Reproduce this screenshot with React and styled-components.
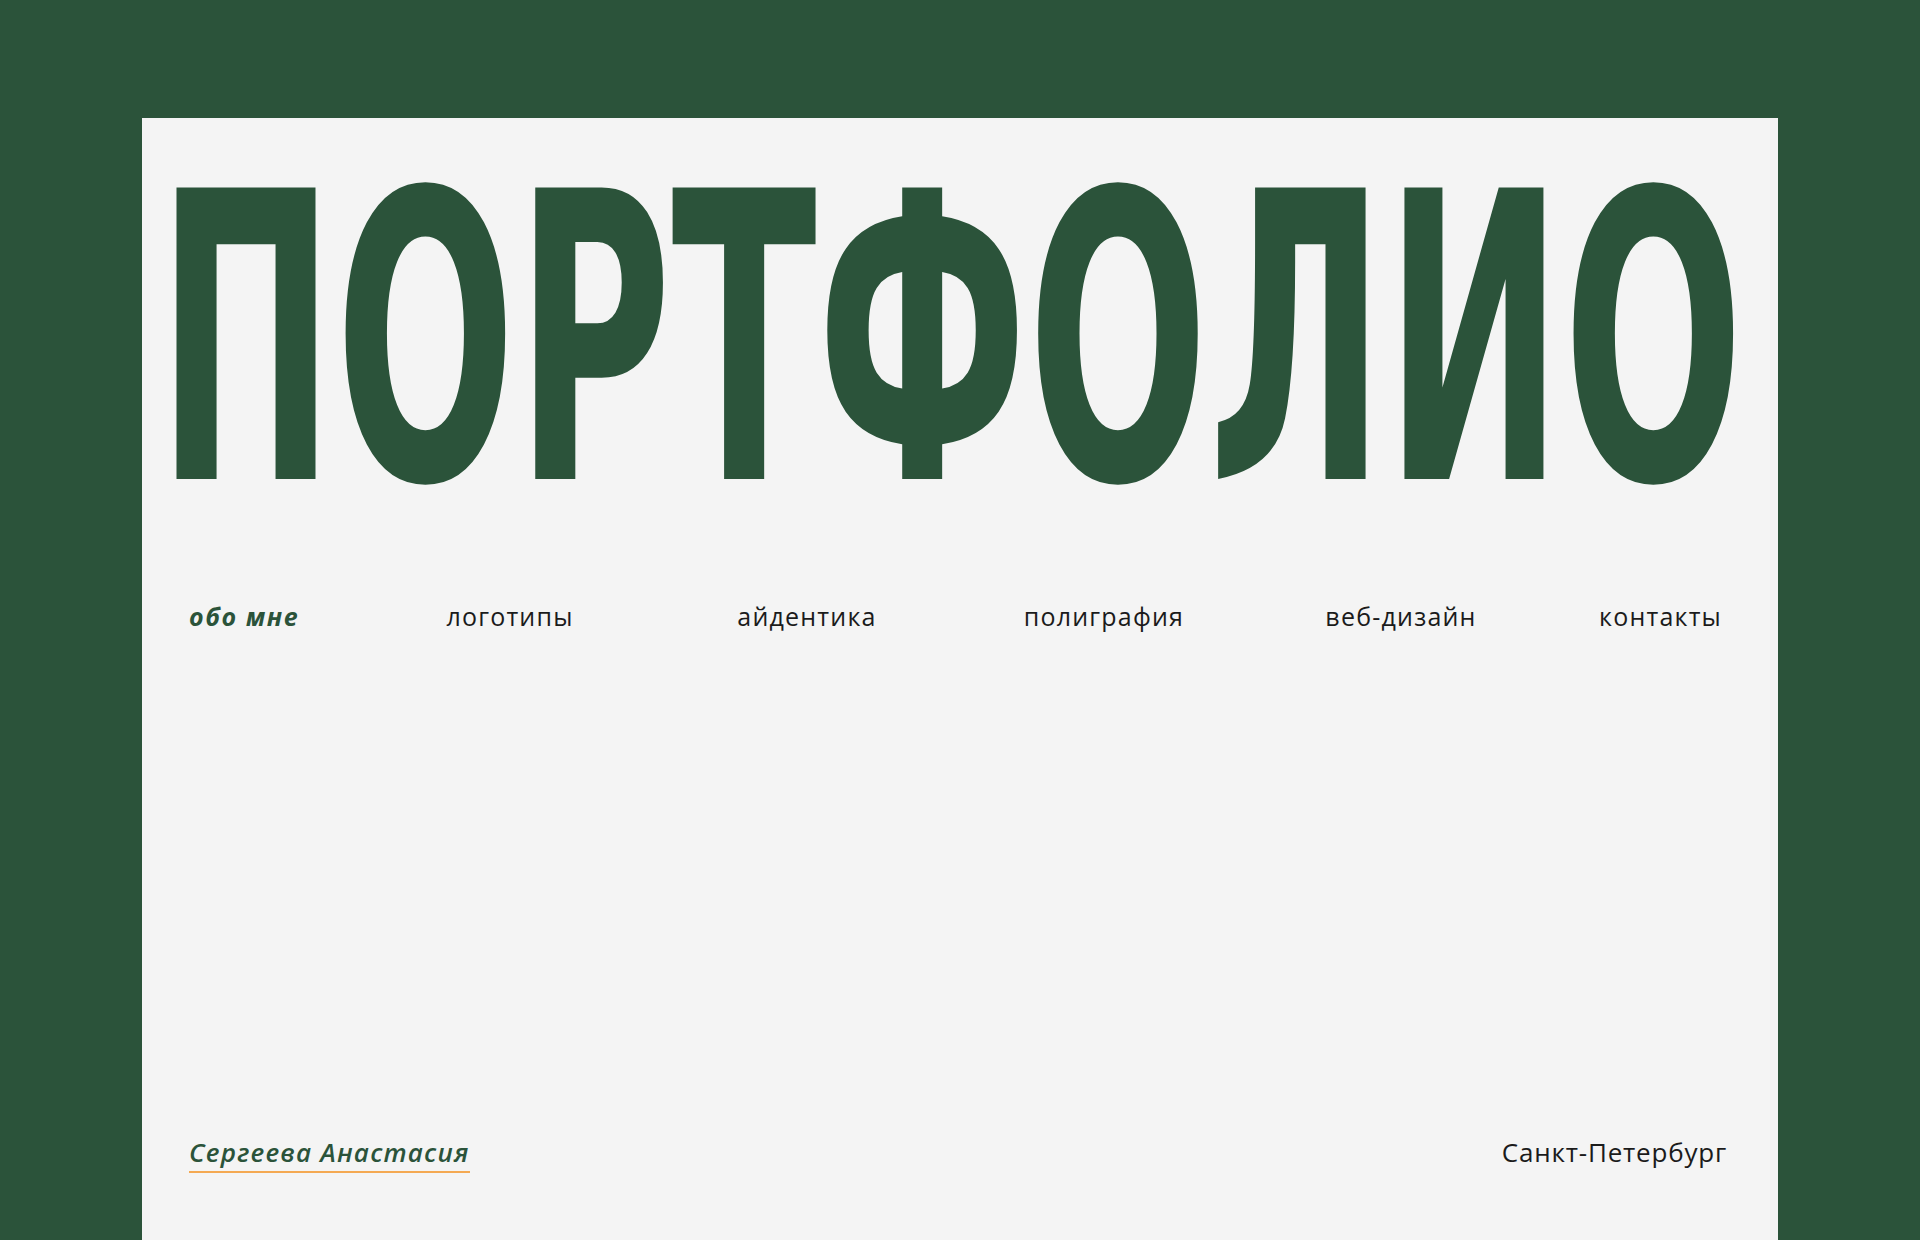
import React from 'react'
import styled, { createGlobalStyle } from 'styled-components'

const GlobalStyle = createGlobalStyle`
    html, body {
        margin: 0;
        padding: 0;
        overflow: hidden;
    }
    body {
        background-color: #2b533a;
        font-family: 'Open Sans', 'Noto Sans', sans-serif;
    }
    * {
        box-sizing: border-box;
    }
`

const Page = styled.div`
    min-height: 100vh;
    padding: 118px 142px 0;
    background-color: #2b533a;
`

const Panel = styled.main`
    min-height: 1122px;
    background-color: #f4f4f4;
    display: flex;
    flex-direction: column;
    padding-bottom: 67px;
`

const TitleWrap = styled.div`
    padding: 23px 0 0 15px;
    height: 426px;
`

const Title = styled.h1`
    margin: 0;
    font-family: 'DejaVu Sans Condensed', 'DejaVu Sans', sans-serif;
    font-stretch: condensed;
    font-weight: 700;
    font-size: 400px;
    line-height: 400px;
    color: #2b533a;
    white-space: nowrap;
    transform: scaleX(0.591);
    transform-origin: left top;
`

const Nav = styled.nav`
    margin-top: 57px;
    padding: 0 56px 0 47px;
    display: grid;
    grid-template-columns: 1fr repeat(4, 297px) 1fr;
    align-items: center;
`

const NavLink = styled.a`
    justify-self: center;
    font-size: 25px;
    line-height: 30px;
    letter-spacing: 1.2px;
    color: #1b1b1b;
    font-weight: 400;
    text-decoration: none;
    cursor: pointer;

    &:first-child {
        justify-self: start;
    }
    &:last-child {
        justify-self: end;
    }
    ${({ $active }) => $active && `
        color: #2b533a;
        font-weight: 700;
        font-style: italic;
        letter-spacing: 1.6px;
    `}
`

const Footer = styled.footer`
    margin-top: auto;
    padding: 0 51px 0 47px;
    display: flex;
    justify-content: space-between;
    align-items: flex-start;
`

const Name = styled.span`
    font-size: 26px;
    line-height: 30px;
    font-style: italic;
    font-weight: 600;
    letter-spacing: 1.2px;
    color: #2b533a;
    padding-bottom: 4px;
    border-bottom: 2px solid #f4a952;
`

const City = styled.span`
    font-size: 26px;
    line-height: 30px;
    letter-spacing: 0.8px;
    font-weight: 400;
    color: #1b1b1b;
`

const links = ['обо мне', 'логотипы', 'айдентика', 'полиграфия', 'веб-дизайн', 'контакты']

export default function App() {
  return (
    <>
    <GlobalStyle />
    <Page>
        <Panel>
            <TitleWrap>
                <Title>ПОРТФОЛИО</Title>
            </TitleWrap>
            <Nav>
                {links.map((l, i) => (
                    <NavLink key={l} $active={i === 0}>{l}</NavLink>
                ))}
            </Nav>
            <Footer>
                <Name>Сергеева Анастасия</Name>
                <City>Санкт-Петербург</City>
            </Footer>
        </Panel>
    </Page>
    </>
  )
}
